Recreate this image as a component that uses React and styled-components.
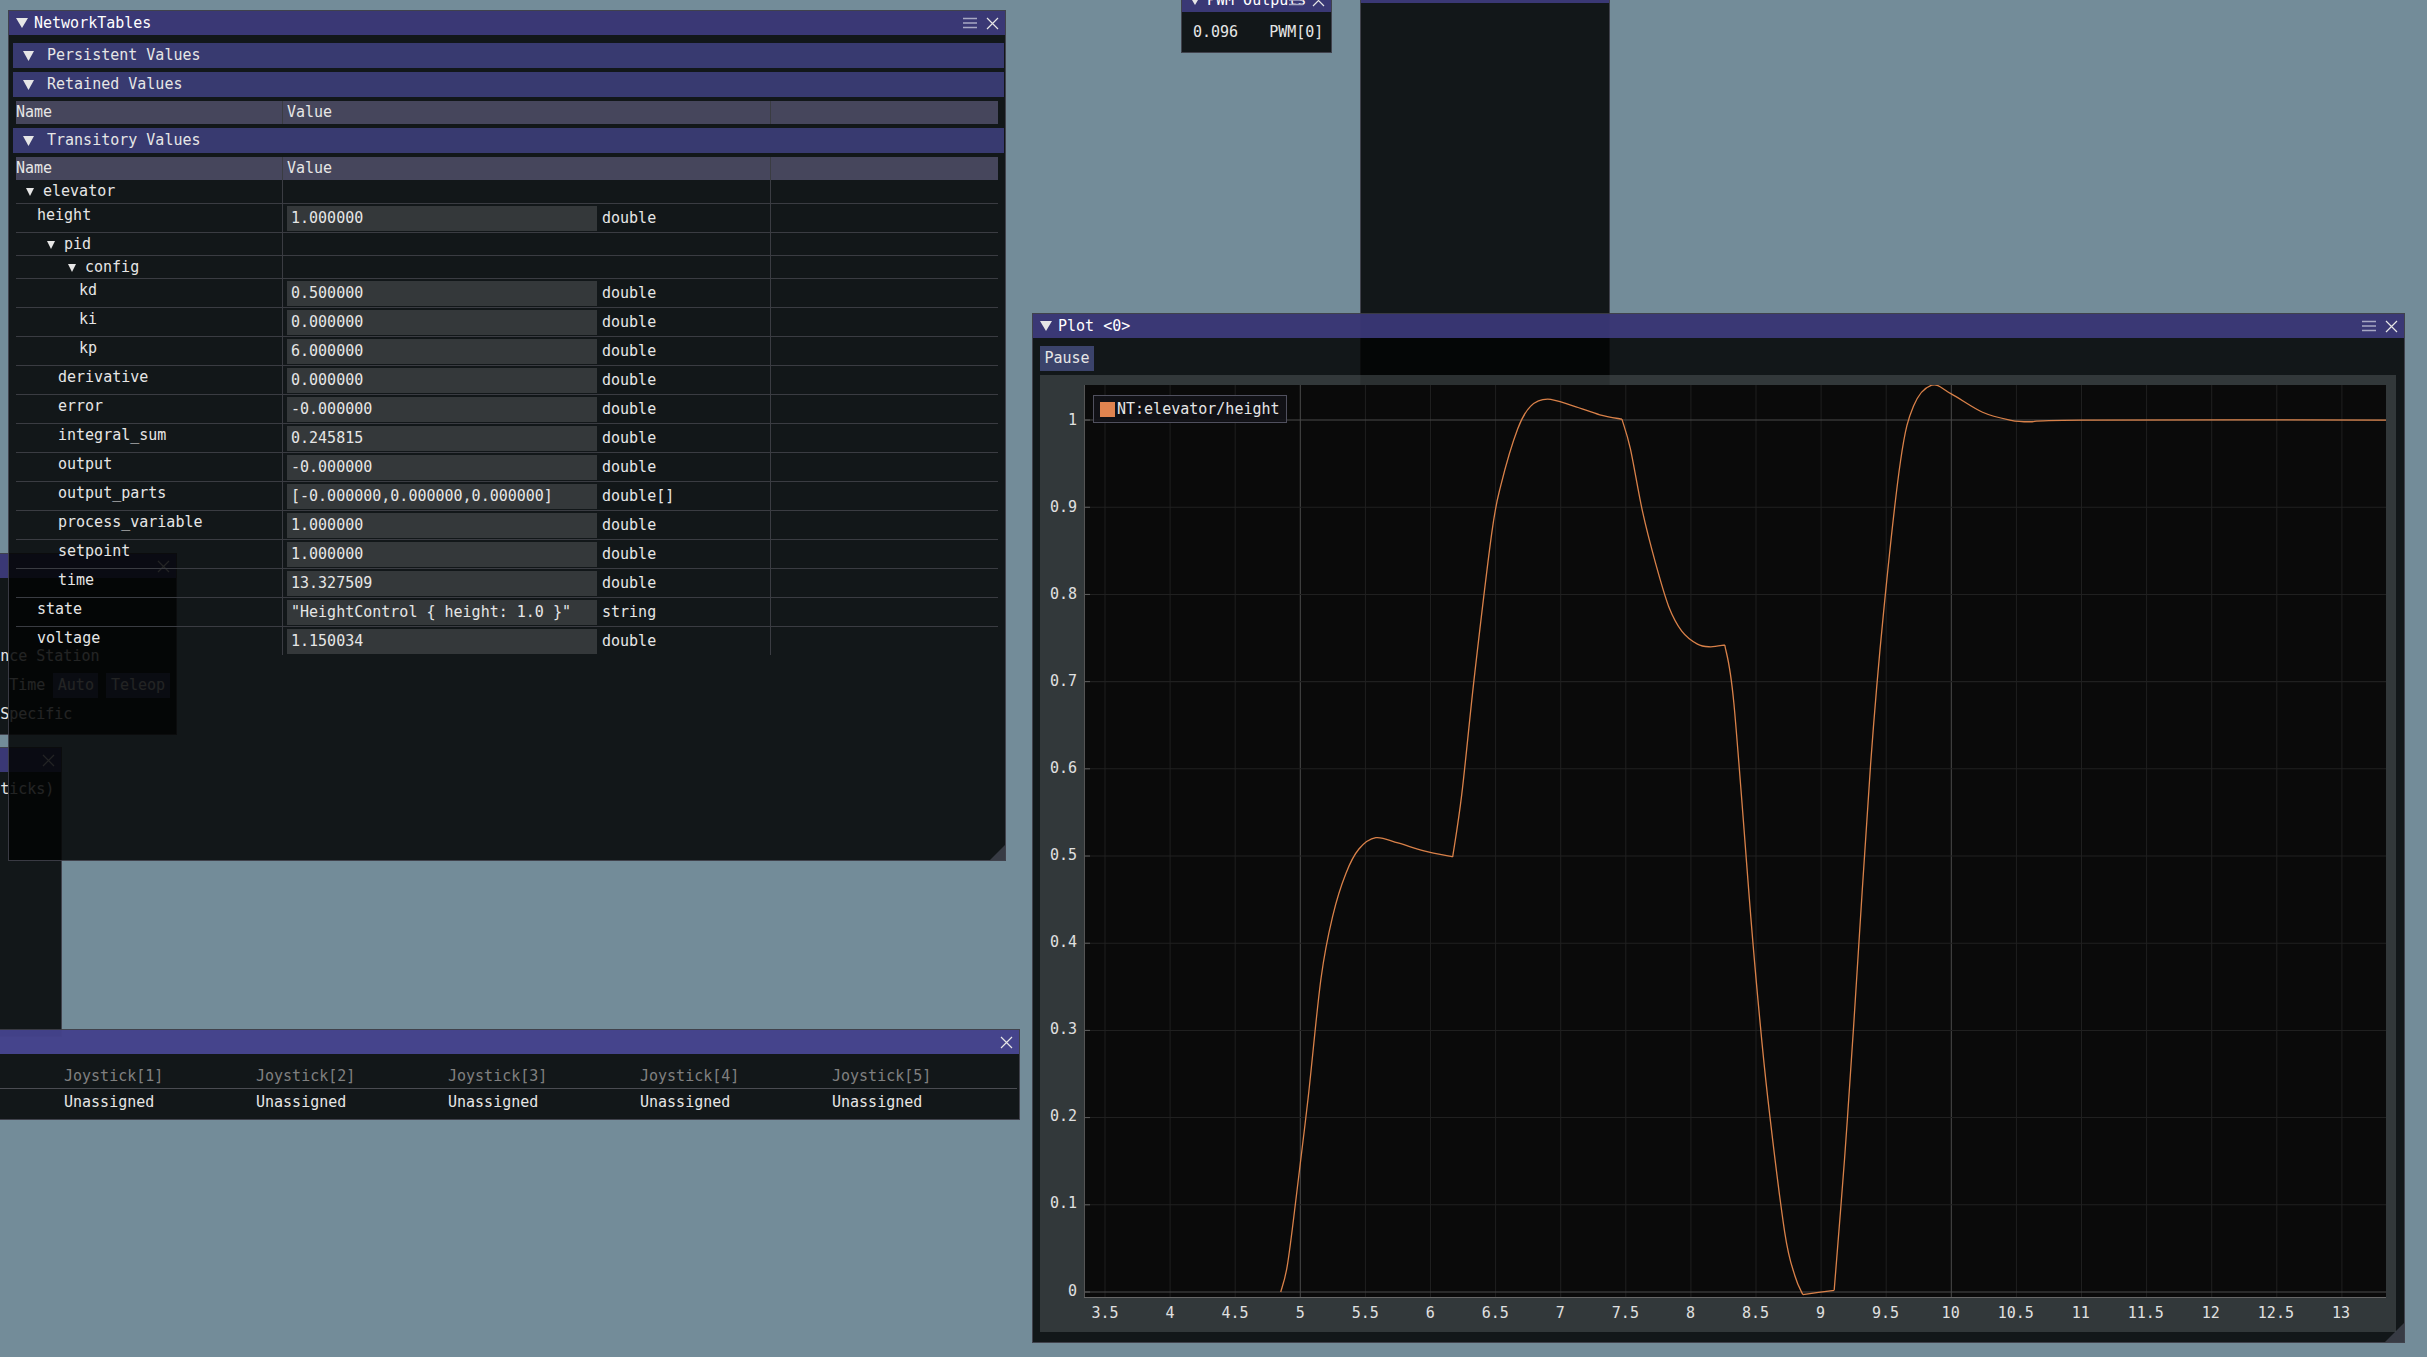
import React from "react";
import styled, { createGlobalStyle } from "styled-components";

const GlobalStyle = createGlobalStyle`
  html, body {
    margin: 0;
    padding: 0;
    background: #738c99;
  }
  body {
    font-family: "DejaVu Sans Mono", "Liberation Mono", monospace;
    font-size: 15px;
    line-height: 17px;
    color: #e6e6e6;
  }
  * {
    box-sizing: border-box;
  }
`;

const Desktop = styled.div`
  position: relative;
  width: 2427px;
  height: 1357px;
  overflow: hidden;
  background: #738c99;
`;

// imgui style windows, placed freely on the desktop
const Window = styled.div`
  position: absolute;
  left: ${(p) => p.$x}px;
  top: ${(p) => p.$y}px;
  width: ${(p) => p.$w}px;
  height: ${(p) => p.$h}px;
  z-index: ${(p) => p.$z};
  display: flex;
  flex-direction: column;
  background: rgba(2, 3, 3, 0.86);
  border: 1px solid rgba(110, 110, 128, 0.5);
  white-space: nowrap;
`;

const TitleBar = styled.div`
  flex: 0 0 24px;
  height: 24px;
  display: flex;
  align-items: center;
  gap: 6px;
  padding: 0 6px 0 7px;
  color: #fff;
  background: ${(p) =>
    p.$active ? "rgba(82, 80, 169, 0.8)" : "rgba(69, 65, 140, 0.8)"};
`;

const TitleText = styled.span`
  flex: 1;
  min-width: 0;
  overflow: visible;
`;

const TitleIcons = styled.div`
  display: flex;
  align-items: center;
  gap: 9px;
`;

const Grip = styled.div`
  position: absolute;
  right: 0;
  bottom: 0;
  width: ${(p) => p.$s}px;
  height: ${(p) => p.$s}px;
  background: rgba(80, 84, 96, 0.6);
  clip-path: polygon(100% 0, 100% 100%, 0 100%);
`;

const NTBody = styled.div`
  flex: 1;
  display: flex;
  flex-direction: column;
  gap: 4px;
  padding: 8px 7px;
`;

const CollapseHeader = styled.div`
  height: 25px;
  margin: 0 -6px 0 -3px;
  display: flex;
  align-items: center;
  gap: 13px;
  padding-left: 10px;
  background: #383a70;
`;

const Table = styled.div`
  display: flex;
  flex-direction: column;
`;

const Row = styled.div`
  display: grid;
  grid-template-columns: 266px 488px 227px;
  height: ${(p) => p.$h}px;
  border-top: ${(p) => (p.$line ? "1px solid #3a3c42" : "none")};
  background: ${(p) => (p.$head ? "#46465c" : "transparent")};
`;

const HeadCell = styled.div`
  display: flex;
  align-items: center;
  padding-left: ${(p) => (p.$first ? 0 : 4)}px;
  border-left: ${(p) => (p.$first ? "none" : "1px solid #3a3c42")};
`;

const NameCell = styled.div`
  display: flex;
  align-items: center;
  gap: 9px;
  height: 17px;
  margin-top: 3px;
  padding-left: ${(p) => p.$indent}px;
`;

const ValueCell = styled.div`
  display: flex;
  align-items: center;
  gap: 5px;
  padding-left: 4px;
  border-left: 1px solid #3a3c42;
`;

const EmptyCell = styled.div`
  border-left: 1px solid #3a3c42;
`;

const ValueBox = styled.div`
  width: 310px;
  height: 25px;
  display: flex;
  align-items: center;
  padding-left: 4px;
  background: #34383a;
  white-space: pre;
`;

const PwmBody = styled.div`
  flex: 1;
  display: flex;
  align-items: center;
  gap: 31px;
  padding-left: 11px;
`;

const GhostBody = styled.div`
  flex: 1;
  display: flex;
  flex-direction: column;
  gap: 8px;
  padding: ${(p) => p.$top}px 0 0 54px;
`;

const GhostLine = styled.div`
  display: flex;
  align-items: center;
  gap: 8px;
  height: 25px;
`;

const Button = styled.div`
  height: 25px;
  display: flex;
  align-items: center;
  padding: 0 4.5px;
  background: #3b436b;
  align-self: flex-start;
`;

const PlotBody = styled.div`
  flex: 1;
  display: flex;
  flex-direction: column;
  gap: 4px;
  padding: 8px 8px 10px 7px;
`;

const PlotFrame = styled.div`
  flex: 1;
  display: grid;
  grid-template-columns: 44px 1fr;
  grid-template-rows: 1fr 34px;
  padding: 10px 10px 0 0;
  background: rgba(76, 83, 86, 0.55);
`;

const YAxis = styled.div`
  position: relative;
`;

const XAxis = styled.div`
  position: relative;
`;

const AxisLabel = styled.span`
  position: absolute;
  color: #e0e0e0;
`;

const PlotArea = styled.div`
  position: relative;
  background: #0a0a0a;
  overflow: hidden;

  svg {
    display: block;
  }
`;

const Legend = styled.div`
  position: absolute;
  left: 9px;
  top: 10px;
  height: 28px;
  display: flex;
  align-items: center;
  gap: 2px;
  padding: 0 6px 0 6px;
  background: rgba(18, 18, 24, 0.92);
  border: 1px solid #50505e;
`;

const Swatch = styled.div`
  width: 15px;
  height: 15px;
  background: #e0834f;
`;

const JoyBody = styled.div`
  flex: 1;
  display: flex;
  flex-direction: column;
  padding-top: 14px;
`;

const JoyRow = styled.div`
  display: grid;
  grid-template-columns: repeat(5, 192px);
  padding-left: 263px;
  height: ${(p) => p.$h}px;
  padding-top: ${(p) => p.$pt}px;
  color: ${(p) => (p.$dim ? "#808080" : "#e6e6e6")};
  border-bottom: ${(p) => (p.$line ? "1px solid #4a4c52" : "none")};
  margin-right: 2px;
`;

const Arrow = ({ w = 12, h = 10 }) => (
  <svg width={w} height={h} viewBox={`0 0 ${w} ${h}`}>
    <polygon points={`0,0 ${w},0 ${w / 2},${h}`} fill="#e6e6e6" />
  </svg>
);

const MenuIcon = () => (
  <svg width="14" height="12" viewBox="0 0 14 12">
    <path d="M0 1.5H14M0 6H14M0 10.5H14" stroke="#a8a8c4" strokeWidth="1.4" />
  </svg>
);

const CloseIcon = () => (
  <svg width="13" height="13" viewBox="0 0 13 13">
    <path d="M1 1L12 12M12 1L1 12" stroke="#e6e6e6" strokeWidth="1.2" />
  </svg>
);

function Title({ text, active, menu = true }) {
  return (
    <TitleBar $active={active}>
      <Arrow />
      <TitleText>{text}</TitleText>
      <TitleIcons>
        {menu && <MenuIcon />}
        <CloseIcon />
      </TitleIcons>
    </TitleBar>
  );
}

const ntRows = [
  { name: "elevator", node: true, depth: 0 },
  { name: "height", depth: 1, value: "1.000000" },
  { name: "pid", node: true, depth: 1 },
  { name: "config", node: true, depth: 2 },
  { name: "kd", depth: 3, value: "0.500000" },
  { name: "ki", depth: 3, value: "0.000000" },
  { name: "kp", depth: 3, value: "6.000000" },
  { name: "derivative", depth: 2, value: "0.000000" },
  { name: "error", depth: 2, value: "-0.000000" },
  { name: "integral_sum", depth: 2, value: "0.245815" },
  { name: "output", depth: 2, value: "-0.000000" },
  {
    name: "output_parts",
    depth: 2,
    value: "[-0.000000,0.000000,0.000000]",
    type: "double[]",
  },
  { name: "process_variable", depth: 2, value: "1.000000" },
  { name: "setpoint", depth: 2, value: "1.000000" },
  { name: "time", depth: 2, value: "13.327509" },
  {
    name: "state",
    depth: 1,
    value: '"HeightControl { height: 1.0 }"',
    type: "string",
  },
  { name: "voltage", depth: 1, value: "1.150034" },
];

function TableHead() {
  return (
    <Row $h={23} $head>
      <HeadCell $first>Name</HeadCell>
      <HeadCell>Value</HeadCell>
      <HeadCell />
    </Row>
  );
}

function NTTable() {
  return (
    <Table>
      <TableHead />
      {ntRows.map((r, i) => (
        <Row key={r.name} $h={r.node ? 23 : 29} $line={i > 0}>
          {r.node ? (
            <NameCell $indent={10 + 21 * r.depth}>
              <Arrow w={8} h={8} />
              {r.name}
            </NameCell>
          ) : (
            <NameCell $indent={21 * r.depth}>{r.name}</NameCell>
          )}
          {r.node ? (
            <EmptyCell />
          ) : (
            <ValueCell>
              <ValueBox>{r.value}</ValueBox>
              {r.type || "double"}
            </ValueCell>
          )}
          <EmptyCell />
        </Row>
      ))}
    </Table>
  );
}

// plot mapping (pixels inside the plot area)
const PW = 1301;
const PH = 912;
const px = (t) => 21 + (t - 3.5) * 130.1;
const py = (v) => 906 - 871 * v;

const segments = [
  [
    [4.85, 0], [4.9, 0.03], [4.96, 0.098], [5.06, 0.223], [5.16, 0.361],
    [5.25, 0.432], [5.35, 0.48], [5.45, 0.508], [5.58, 0.521], [5.75, 0.515],
    [5.95, 0.506], [6.17, 0.499],
  ],
  [
    [6.17, 0.499], [6.24, 0.571], [6.34, 0.71], [6.47, 0.87], [6.54, 0.925],
    [6.67, 0.99], [6.77, 1.016], [6.9, 1.024], [7.1, 1.016], [7.3, 1.006],
    [7.47, 1.001],
  ],
  [
    [7.47, 1.001], [7.535, 0.967], [7.63, 0.894], [7.73, 0.835], [7.83, 0.786],
    [7.93, 0.758], [8.05, 0.743], [8.15, 0.74], [8.26, 0.742],
  ],
  [
    [8.26, 0.742], [8.33, 0.675], [8.46, 0.43], [8.52, 0.327], [8.59, 0.223],
    [8.72, 0.069], [8.8, 0.018], [8.86, -0.003],
  ],
  [[8.86, -0.003], [9.1, 0.002]],
  [
    [9.1, 0.002], [9.18, 0.153], [9.25, 0.306], [9.38, 0.605], [9.48, 0.78],
    [9.61, 0.953], [9.71, 1.016], [9.85, 1.04], [10.0, 1.03], [10.24, 1.009],
    [10.45, 1.0], [10.6, 0.998], [11, 1.0], [13.4, 1.0],
  ],
];

function smooth(pts) {
  const p = pts.map(([t, v]) => [px(t), py(v)]);
  let d = "";
  for (let i = 0; i < p.length - 1; i++) {
    const p0 = p[i - 1] || p[i];
    const p1 = p[i];
    const p2 = p[i + 1];
    const p3 = p[i + 2] || p2;
    const c1 = [p1[0] + (p2[0] - p0[0]) / 6, p1[1] + (p2[1] - p0[1]) / 6];
    const c2 = [p2[0] - (p3[0] - p1[0]) / 6, p2[1] - (p3[1] - p1[1]) / 6];
    d += ` C${c1[0].toFixed(1)},${c1[1].toFixed(1)} ${c2[0].toFixed(1)},${c2[1].toFixed(1)} ${p2[0].toFixed(1)},${p2[1].toFixed(1)}`;
  }
  return `M${p[0][0].toFixed(1)},${p[0][1].toFixed(1)}` + d;
}

const curve = segments.map(smooth).join(" ");

const xTicks = [];
for (let t = 3.5; t <= 13.01; t += 0.5) xTicks.push(Math.round(t * 10) / 10);
const yTicks = [];
for (let i = 0; i <= 10; i++) yTicks.push(i / 10);

function Plot() {
  return (
    <PlotFrame>
      <YAxis>
        {yTicks.map((v) => (
          <AxisLabel key={v} style={{ right: 7, top: py(v) - 8.5 }}>
            {v === 0 || v === 1 ? String(v) : v.toFixed(1)}
          </AxisLabel>
        ))}
      </YAxis>
      <PlotArea>
        <svg
          width="100%"
          height="100%"
          viewBox={`0 0 ${PW} ${PH}`}
          preserveAspectRatio="none"
        >
          {xTicks.map((t) => (
            <line
              key={"x" + t}
              x1={px(t)}
              x2={px(t)}
              y1={0}
              y2={PH}
              stroke={t === 5 || t === 10 ? "#4a4a4a" : "#202020"}
              strokeWidth="1"
            />
          ))}
          {yTicks.map((v) => (
            <line
              key={"y" + v}
              x1={0}
              x2={PW}
              y1={py(v)}
              y2={py(v)}
              stroke={v === 0 || v === 1 ? "#4a4a4a" : "#202020"}
              strokeWidth="1"
            />
          ))}
          {yTicks.map((v) => (
            <line
              key={"k" + v}
              x1={0}
              x2={6}
              y1={py(v)}
              y2={py(v)}
              stroke="#5e5e5e"
              strokeWidth="1"
            />
          ))}
          <line x1={0.5} x2={0.5} y1={0} y2={PH} stroke="#555" />
          <line x1={0} x2={PW} y1={PH - 0.5} y2={PH - 0.5} stroke="#666" />
          <path d={curve} fill="none" stroke="#d98149" strokeWidth="1.3" />
        </svg>
        <Legend>
          <Swatch />
          NT:elevator/height
        </Legend>
      </PlotArea>
      <div />
      <XAxis>
        {xTicks.map((t) => (
          <AxisLabel
            key={t}
            style={{ left: px(t), top: 7, transform: "translateX(-50%)" }}
          >
            {String(t)}
          </AxisLabel>
        ))}
      </XAxis>
    </PlotFrame>
  );
}

export default function App() {
  return (
    <Desktop>
      <GlobalStyle />

      <Window $x={1360} $y={-22} $w={250} $h={412} $z={1}>
        <Title text="" menu={false} />
      </Window>

      <Window $x={-100} $y={553} $w={277} $h={182} $z={2}>
        <Title text="" menu={false} />
        <GhostBody $top={70}>
          <span>Alliance Station</span>
          <GhostLine>
            <span>Match Time</span>
            <Button>Auto</Button>
            <Button>Teleop</Button>
          </GhostLine>
          <span>Game Specific</span>
        </GhostBody>
      </Window>

      <Window $x={-100} $y={747} $w={162} $h={290} $z={3}>
        <Title text="" menu={false} />
        <GhostBody $top={9}>
          <span>(Joysticks)</span>
        </GhostBody>
      </Window>

      <Window $x={8} $y={10} $w={998} $h={851} $z={4}>
        <Title text="NetworkTables" />
        <NTBody>
          <CollapseHeader>
            <Arrow w={11} h={10} />
            Persistent Values
          </CollapseHeader>
          <CollapseHeader>
            <Arrow w={11} h={10} />
            Retained Values
          </CollapseHeader>
          <TableHead />
          <CollapseHeader>
            <Arrow w={11} h={10} />
            Transitory Values
          </CollapseHeader>
          <NTTable />
        </NTBody>
        <Grip $s={15} />
      </Window>

      <Window $x={1181} $y={-13} $w={151} $h={66} $z={5}>
        <Title text="PWM Outputs" />
        <PwmBody>
          <span>0.096</span>
          <span>PWM[0]</span>
        </PwmBody>
      </Window>

      <Window $x={1032} $y={313} $w={1373} $h={1030} $z={6}>
        <Title text="Plot <0>" />
        <PlotBody>
          <Button>Pause</Button>
          <Plot />
        </PlotBody>
        <Grip $s={19} />
      </Window>

      <Window $x={-200} $y={1029} $w={1220} $h={91} $z={7}>
        <Title text="" active menu={false} />
        <JoyBody>
          <JoyRow $h={21} $pt={0} $dim $line>
            {[1, 2, 3, 4, 5].map((n) => (
              <span key={n}>Joystick[{n}]</span>
            ))}
          </JoyRow>
          <JoyRow $h={22} $pt={5}>
            {[1, 2, 3, 4, 5].map((n) => (
              <span key={n}>Unassigned</span>
            ))}
          </JoyRow>
        </JoyBody>
      </Window>
    </Desktop>
  );
}
